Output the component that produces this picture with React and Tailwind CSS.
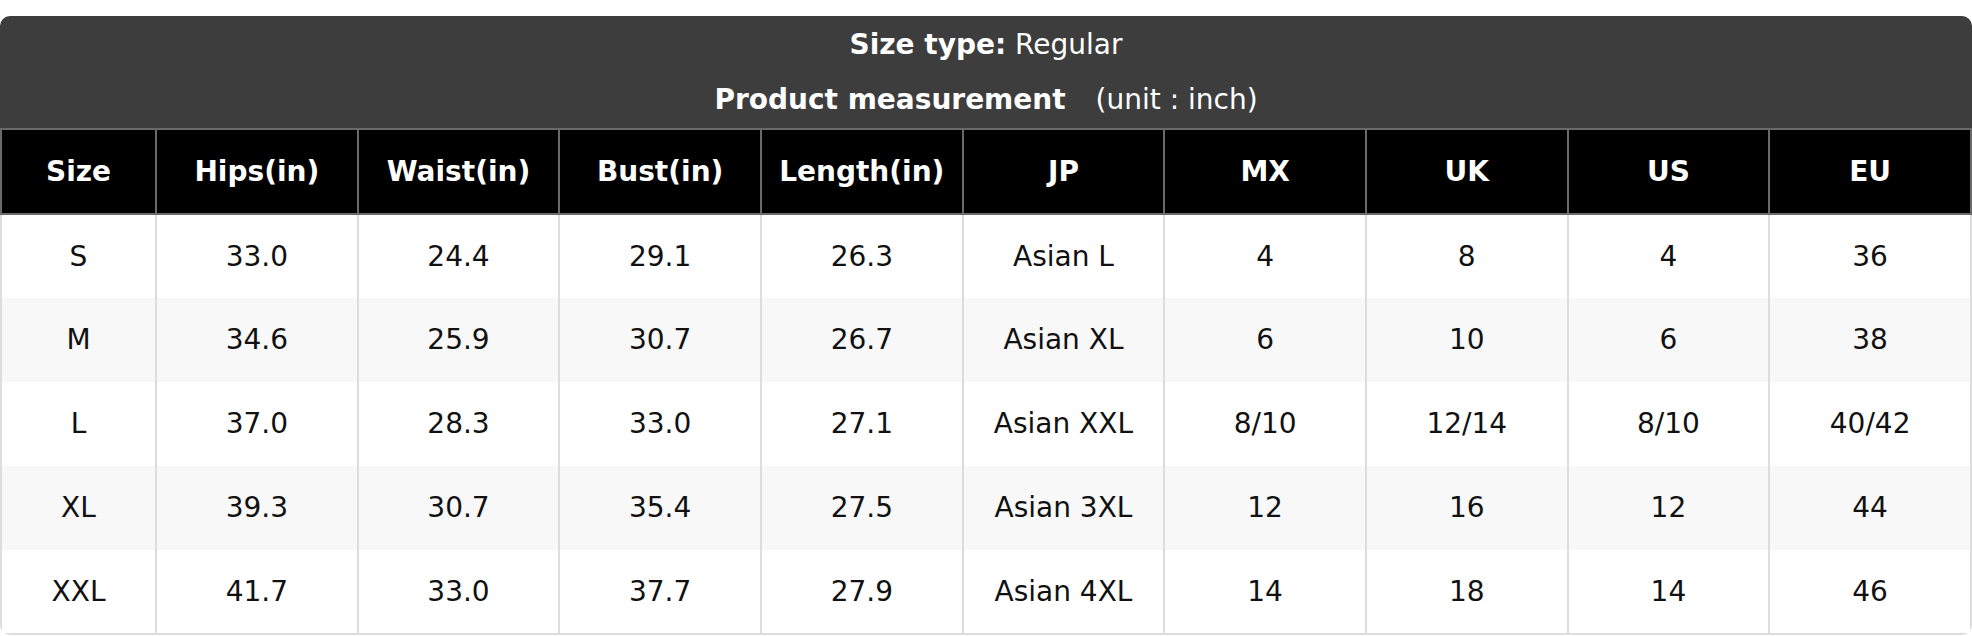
const columns = ["Size", "Hips(in)", "Waist(in)", "Bust(in)", "Length(in)", "JP", "MX", "UK", "US", "EU"];

const rows = [
  ["S", "33.0", "24.4", "29.1", "26.3", "Asian L", "4", "8", "4", "36"],
  ["M", "34.6", "25.9", "30.7", "26.7", "Asian XL", "6", "10", "6", "38"],
  ["L", "37.0", "28.3", "33.0", "27.1", "Asian XXL", "8/10", "12/14", "8/10", "40/42"],
  ["XL", "39.3", "30.7", "35.4", "27.5", "Asian 3XL", "12", "16", "12", "44"],
  ["XXL", "41.7", "33.0", "37.7", "27.9", "Asian 4XL", "14", "18", "14", "46"],
];

export default function App() {
  return (
    <div className="bg-white pt-4 font-['DejaVu_Sans',sans-serif] text-[28px] leading-none">
      <div className="overflow-hidden rounded-[10px]">
        {/* title block */}
        <div className="flex h-[112px] flex-col bg-[#3d3d3d] text-white">
          <div className="flex h-[55px] items-center justify-center pt-[2px]">
            <span className="font-bold">Size type:</span>
            <span>&nbsp;Regular</span>
          </div>
          <div className="flex h-[55px] items-center justify-center pt-[2px]">
            <span className="font-bold">Product measurement</span>
            <span className="ml-[30px]">(unit : inch)</span>
          </div>
        </div>

        <table className="w-full table-fixed border-collapse">
          <colgroup>
            <col className="w-[155px]" />
            {columns.slice(1).map((c) => (
              <col key={c} />
            ))}
          </colgroup>
          <thead>
            <tr>
              {columns.map((c) => (
                <th
                  key={c}
                  className="h-[85px] border-2 border-[#6a6a6a] bg-black text-center font-bold text-white"
                >
                  {c}
                </th>
              ))}
            </tr>
          </thead>
          <tbody>
            {rows.map((row, i) => (
              <tr key={row[0]} className={i % 2 === 1 ? "bg-[#f8f8f8]" : "bg-white"}>
                {row.map((cell, j) => (
                  <td
                    key={j}
                    className={`h-[84px] border-x-2 border-[#dddddd] text-center text-[#111] ${
                      i === rows.length - 1 ? "border-b-2" : ""
                    }`}
                  >
                    {cell}
                  </td>
                ))}
              </tr>
            ))}
          </tbody>
        </table>
      </div>
    </div>
  );
}
